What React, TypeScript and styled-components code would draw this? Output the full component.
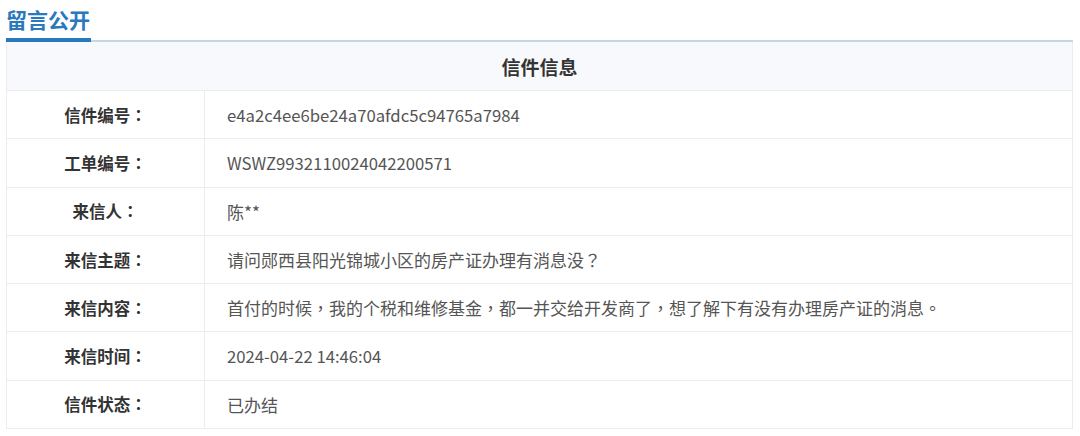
import React from 'react';
import styled, { createGlobalStyle } from 'styled-components';

const GlobalStyle = createGlobalStyle`
  body {
    margin: 0;
    background: #ffffff;
    font-family: "Noto Sans CJK TC", "Noto Sans CJK SC", "Noto Sans", sans-serif;
  }
`;

const Page = styled.div`
  width: 1080px;
  height: 436px;
  padding: 0 7px 0 6px;
  box-sizing: border-box;
  overflow: hidden;
`;

const TitleBar = styled.div`
  display: flex;
  align-items: flex-end;
  height: 40px;
  border-bottom: 2px solid #c3d7e6;
`;

const Title = styled.h2`
  margin: 0 0 -2px;
  padding: 0 1px 3px 0;
  font-family: "Noto Sans CJK SC", sans-serif;
  font-size: 21px;
  font-weight: 700;
  line-height: 32px;
  color: #2a78be;
  border-bottom: 4px solid #2a78be;
`;

const Table = styled.div`
  border-left: 1px solid #ececec;
  border-right: 1px solid #ececec;
`;

const HeaderRow = styled.div`
  height: 48px;
  display: flex;
  align-items: center;
  justify-content: center;
  background: #f8f9fc;
  border-bottom: 1px solid #ececec;
  font-family: "Noto Sans CJK SC", sans-serif;
  font-size: 19px;
  font-weight: 700;
  color: #333;
`;

const Row = styled.div`
  display: grid;
  grid-template-columns: 198px 1fr;
  height: 48.3px;
  border-bottom: 1px solid #ececec;
  box-sizing: border-box;
`;

const Label = styled.div`
  display: flex;
  align-items: center;
  justify-content: center;
  border-right: 1px solid #ececec;
  font-size: 16.5px;
  font-weight: 700;
  color: #333;
`;

const Value = styled.div<{ $latin?: boolean }>`
  display: flex;
  align-items: center;
  padding-left: 22px;
  font-size: ${(p) => (p.$latin ? '16.7px' : '17px')};
  color: #555;
`;

const rows: { label: string; value: string; latin?: boolean }[] = [
  { label: '信件编号：', value: 'e4a2c4ee6be24a70afdc5c94765a7984', latin: true },
  { label: '工单编号：', value: 'WSWZ9932110024042200571', latin: true },
  { label: '来信人：', value: '陈**' },
  { label: '来信主题：', value: '请问郧西县阳光锦城小区的房产证办理有消息没？' },
  { label: '来信内容：', value: '首付的时候，我的个税和维修基金，都一并交给开发商了，想了解下有没有办理房产证的消息。' },
  { label: '来信时间：', value: '2024-04-22 14:46:04', latin: true },
  { label: '信件状态：', value: '已办结' },
];

const App: React.FC = () => (
  <>
    <GlobalStyle />
    <Page>
      <TitleBar>
        <Title>留言公开</Title>
      </TitleBar>
      <Table>
        <HeaderRow>信件信息</HeaderRow>
        {rows.map((r) => (
          <Row key={r.label}>
            <Label>{r.label}</Label>
            <Value $latin={r.latin}>{r.value}</Value>
          </Row>
        ))}
      </Table>
    </Page>
  </>
);

export default App;
